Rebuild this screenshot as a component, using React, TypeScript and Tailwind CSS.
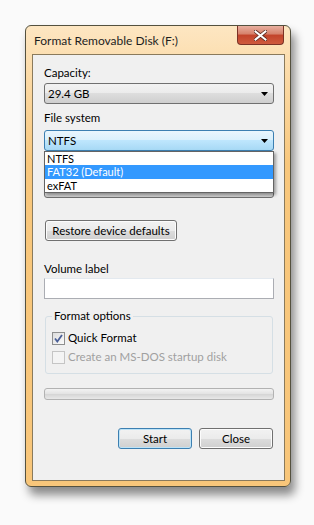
import React from "react";

const font = { fontFamily: 'Lato, "Noto Sans", sans-serif' };

const Arrow = () => (
  <svg width="7" height="4" viewBox="0 0 7 4" className="shrink-0">
    <path d="M0 0h7L3.5 4z" fill="#000" />
  </svg>
);

const Combo = ({ value, focused }: { value?: string; focused?: boolean }) => (
  <div
    className={
      "flex items-center h-[21px] pl-[3px] pr-[5px] rounded-[3px] border " +
      (focused
        ? "border-[#3c7fb1] bg-[linear-gradient(#eaf6fd,#d9f0fc_50%,#bee6fd_50%,#a7d9f5)]"
        : "border-[#707070] bg-[linear-gradient(#f2f2f2,#ebebeb_50%,#dddddd_50%,#cfcfcf)]")
    }
  >
    <span className="flex-1 text-[11.5px] leading-none text-black">{value}</span>
    <Arrow />
  </div>
);

const Button = ({ label, primary, className }: { label: string; primary?: boolean; className?: string }) => (
  <div
    className={
      "flex items-center justify-center h-[21px] rounded-[3px] border text-[11.5px] whitespace-nowrap text-black " +
      (primary
        ? "border-[#3c7fb1] shadow-[inset_0_0_0_1px_#bde3f7] bg-[linear-gradient(#f2f2f2,#ebebeb_50%,#dddddd_50%,#cfcfcf)] "
        : "border-[#707070] shadow-[inset_0_0_0_1px_#fcfcfc] bg-[linear-gradient(#f2f2f2,#ebebeb_50%,#dddddd_50%,#cfcfcf)] ") +
      (className ?? "")
    }
  >
    {label}
  </div>
);

export default function App() {
  return (
    <div className="w-[314px] h-[525px] bg-[#fafafa] pt-[25px] pl-[25px]" style={font}>
      {/* window frame */}
      <div className="relative w-[266px] h-[462px] rounded-[6px] border border-[#54513f] bg-[linear-gradient(#fde6c2,#fbd9a4_12%,#f8c77c_30%,#f8c67a)] shadow-[4px_8px_10px_rgba(0,0,0,0.45)] flex flex-col">
        {/* title bar */}
        <div className="relative h-[28px] flex items-center pl-[8px]">
          <span className="text-[12px] text-[#1e1e1e] pt-[2px]">Format Removable Disk (F:)</span>
          <div className="absolute right-[6px] top-0 w-[47px] h-[19px] rounded-b-[4px] border border-t-0 border-[#7b3226] bg-[linear-gradient(#e8b0a0,#d6806a_45%,#c2432a_50%,#cf5a3e)] flex items-center justify-center">
            <svg width="13" height="11" viewBox="0 0 13 11">
              <path d="M1.5 1.5l10 8M11.5 1.5l-10 8" stroke="#5a2a20" strokeWidth="3.6" strokeLinecap="square" />
              <path d="M1.5 1.5l10 8M11.5 1.5l-10 8" stroke="#fff" strokeWidth="2" strokeLinecap="square" />
            </svg>
          </div>
        </div>

        {/* client area */}
        <div className="relative ml-[6px] mr-[5px] mb-[5px] flex-1 border border-[#8a7a5c] bg-[#f0f0f0] pl-[11px] pr-[10px] pt-[10px] flex flex-col">
          <div className="text-[11.5px] leading-[16px] text-black">Capacity:</div>
          <div className="mt-[2px]">
            <Combo value="29.4 GB" />
          </div>
          <div className="mt-[6px] text-[11.5px] leading-[16px] text-black">File system</div>
          <div className="mt-[4px] relative">
            <Combo value="NTFS" focused />
            {/* open dropdown list */}
            <div className="absolute left-0 right-0 top-[21px] z-10 bg-white border border-[#646464] shadow-[2px_2px_3px_rgba(0,0,0,0.35)] text-[11px] leading-[13px] text-black">
              <div className="pl-[2px] h-[13px]">NTFS</div>
              <div className="pl-[2px] h-[14px] leading-[14px] bg-[#3399ff] text-white">FAT32 (Default)</div>
              <div className="pl-[2px] h-[13px]">exFAT</div>
            </div>
          </div>
          {/* allocation unit size row, covered by the open list */}
          <div className="mt-[26px]">
            <Combo />
          </div>

          <Button label="Restore device defaults" className="mt-[22px] ml-[1px] w-[132px]" />

          <div className="mt-[20px] text-[11.5px] leading-[16px] text-black">Volume label</div>
          <div className="mt-[1px] h-[21px] border border-[#abadb3] border-t-[#e3e9ef] bg-white" />

          {/* format options group */}
          <div className="relative mt-[17px] mx-[1px] h-[58px] rounded-[3px] border border-[#d5dfe5] pl-[6px] pt-[13px]">
            <span className="absolute left-[6px] -top-[9px] px-[2px] bg-[#f0f0f0] text-[11.5px] leading-[16px] text-black">
              Format options
            </span>
            <div className="flex items-center gap-[3px]">
              <div className="w-[13px] h-[13px] border border-[#8e8f8f] bg-[linear-gradient(135deg,#dcdcdc,#fbfbfb)] flex items-center justify-center">
                <svg width="9" height="9" viewBox="0 0 9 9">
                  <path d="M1 4.5l2.3 3L8 1" stroke="#4a5f97" strokeWidth="1.8" fill="none" />
                </svg>
              </div>
              <span className="text-[11.5px] leading-[16px] text-black">Quick Format</span>
            </div>
            <div className="mt-[3px] flex items-center gap-[3px]">
              <div className="w-[13px] h-[13px] border border-[#c5c5c5] bg-[#f4f4f4]" />
              <span className="text-[11.5px] leading-[16px] text-[#a0a0a0]">Create an MS-DOS startup disk</span>
            </div>
          </div>

          {/* progress bar */}
          <div className="mt-[14px] h-[12px] rounded-[3px] border border-[#b2b2b2] bg-[linear-gradient(#f3f3f3,#e2e2e2_50%,#d6d6d6_55%,#e8e8e8)]" />

          <div className="mt-[28px] flex justify-end gap-[7px] pr-[1px]">
            <Button label="Start" primary className="w-[74px]" />
            <Button label="Close" className="w-[74px]" />
          </div>
        </div>
      </div>
    </div>
  );
}
